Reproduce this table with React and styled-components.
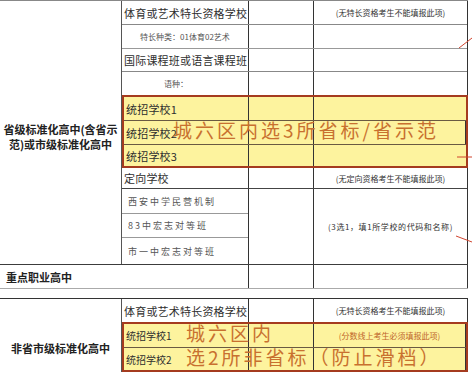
import React from 'react'
import styled, { createGlobalStyle } from 'styled-components'

const GlobalStyle = createGlobalStyle`
  * { box-sizing: border-box; }
  body {
    margin: 0;
    background: #fff;
    font-family: "Noto Sans CJK SC", "Liberation Sans", sans-serif;
  }
`

const Sheet = styled.div`
  position: relative;
  width: 472px;
  height: 376px;
  overflow: hidden;
  background: #fff;
  color: #333;
`

const Table = styled.div`
  display: grid;
  grid-template-columns: 122px 346px;
  width: 468px;
  border-top: 1px solid ${({ $edge }) => $edge};
  border-bottom: ${({ $closed }) => ($closed ? '1px solid #3c3c3c' : 'none')};
  margin-top: ${({ $gap }) => $gap || 0}px;
`

const Label = styled.div`
  display: flex;
  align-items: center;
  justify-content: center;
  padding: ${({ $push }) => $push}px 1px 0;
  border-right: 1px solid #555;
  font-size: 11px;
  font-weight: 700;
  line-height: 15px;
  text-align: center;
  color: #222;
`

const Side = styled.div`
  display: flex;
  flex-direction: column;
  border-right: 1px solid #333;
`

const Row = styled.div`
  position: relative;
  display: grid;
  grid-template-columns: ${({ $inset }) => ($inset ? '125px 65px 1fr' : '127px 65px 1fr')};
  height: ${({ $h }) => $h}px;
  border-bottom: ${({ $line }) => ($line ? `1px solid ${$line}` : 'none')};
`

const Cell = styled.div`
  display: flex;
  align-items: center;
  justify-content: ${({ $center }) => ($center ? 'center' : 'flex-start')};
  padding: 0 2px;
  border-right: 1px solid #333;
  white-space: nowrap;
  overflow: hidden;
  &:last-child { border-right: none; }
`

const School = styled.span`
  font-size: ${({ $small }) => ($small ? 10 : 11)}px;
  letter-spacing: ${({ $small }) => ($small ? 0 : 0.2)}px;
  color: #2e2e2e;
`

const Hint = styled.span`
  font-size: 8px;
  color: #555;
  padding-right: ${({ $shift }) => $shift || 0}px;
`

const Note = styled.span`
  font-size: 8px;
  color: ${({ $warm }) => ($warm ? '#c0652a' : '#333')};
  letter-spacing: ${({ $wide }) => ($wide ? 0.6 : 0)}px;
`

const Highlight = styled.div`
  display: flex;
  flex-direction: column;
  border: 2px solid #a53b1f;
  background: #fdf39e;
  margin-right: -1px;
`

const Options = styled.div`
  display: flex;
  flex-direction: column;
  border-right: 1px solid #333;
`

const Option = styled.div`
  display: flex;
  align-items: center;
  height: ${({ $h }) => $h}px;
  padding-left: 6px;
  border-bottom: ${({ $last }) => ($last ? 'none' : '1px solid #999')};
  font-size: 9px;
  letter-spacing: 2px;
  color: #555;
`

const Wide = styled.div`
  display: grid;
  grid-template-columns: 249px 65px 154px;
  width: 468px;
  height: 24px;
  border-bottom: 1px solid #aaa;
`

const WideCell = styled.div`
  display: flex;
  align-items: center;
  padding-left: 6px;
  border-right: 1px solid #333;
  font-size: 11px;
  font-weight: 700;
  color: #222;
`

const Scrawl = styled.span`
  position: absolute;
  left: ${({ $x }) => $x}px;
  top: -3px;
  font-size: 19px;
  line-height: 24px;
  letter-spacing: 3px;
  color: #c8702f;
  white-space: nowrap;
  pointer-events: none;
`

const Marks = styled.svg`
  position: absolute;
  left: 0;
  top: 0;
  pointer-events: none;
`

const HL = '#6a5a42'

export default function App() {
  return (
    <Sheet>
      <GlobalStyle />
      <Table $edge="#888" $closed>
        <Label $push={8}>省级标准化高中(含省示范)或市级标准化高中</Label>
        <Side>
          <Row $h={24} $line="#888">
            <Cell><School>体育或艺术特长资格学校</School></Cell>
            <Cell />
            <Cell $center><Note>(无特长资格考生不能填报此项)</Note></Cell>
          </Row>
          <Row $h={24} $line="#999">
            <Cell $center><Hint>特长种类：01体育02艺术</Hint></Cell>
            <Cell />
            <Cell />
          </Row>
          <Row $h={23} $line="#888">
            <Cell><School>国际课程班或语言课程班</School></Cell>
            <Cell />
            <Cell />
          </Row>
          <Row $h={23}>
            <Cell $center><Hint $shift={18}>语种：</Hint></Cell>
            <Cell />
            <Cell />
          </Row>
          <Highlight>
            <Row $inset $h={24} $line={HL}>
              <Cell><School>统招学校1</School></Cell>
              <Cell />
              <Cell />
            </Row>
            <Row $inset $h={24} $line={HL}>
              <Cell><School>统招学校2</School></Cell>
              <Cell />
              <Cell />
              <Scrawl $x={49}>城六区内选3所省标/省示范</Scrawl>
            </Row>
            <Row $inset $h={21}>
              <Cell><School>统招学校3</School></Cell>
              <Cell />
              <Cell />
            </Row>
          </Highlight>
          <Row $h={21} $line="#444">
            <Cell><School>定向学校</School></Cell>
            <Cell />
            <Cell $center><Note>(无定向资格考生不能填报此项)</Note></Cell>
          </Row>
          <Row $h={75}>
            <Options>
              <Option $h={25}>西安中学民营机制</Option>
              <Option $h={24}>83中宏志对等班</Option>
              <Option $h={26} $last>市一中宏志对等班</Option>
            </Options>
            <Cell />
            <Cell $center><Note $wide>(3选1，填1所学校的代码和名称)</Note></Cell>
          </Row>
        </Side>
      </Table>

      <Wide>
        <WideCell>重点职业高中</WideCell>
        <WideCell />
        <WideCell />
      </Wide>

      <Table $edge="#333" $gap={9}>
        <Label $push={26}>非省市级标准化高中</Label>
        <Side>
          <Row $h={23}>
            <Cell><School>体育或艺术特长资格学校</School></Cell>
            <Cell />
            <Cell $center><Note>(无特长资格考生不能填报此项)</Note></Cell>
          </Row>
          <Highlight>
            <Row $inset $h={24} $line={HL}>
              <Cell><School $small>统招学校1</School></Cell>
              <Cell />
              <Cell $center><Note $warm>(分数线上考生必须填报此项)</Note></Cell>
              <Scrawl $x={62}>城六区内</Scrawl>
            </Row>
            <Row $inset $h={22}>
              <Cell><School $small>统招学校2</School></Cell>
              <Cell />
              <Cell />
              <Scrawl $x={62}>选2所非省标（防止滑档）</Scrawl>
            </Row>
          </Highlight>
        </Side>
      </Table>

      <Marks width="472" height="376">
        <g stroke="#d0452f" strokeWidth="1" fill="none">
          <line x1="459" y1="48" x2="472" y2="38" />
          <line x1="457" y1="157" x2="472" y2="157" />
          <line x1="456" y1="236" x2="472" y2="242" />
        </g>
      </Marks>
    </Sheet>
  )
}
